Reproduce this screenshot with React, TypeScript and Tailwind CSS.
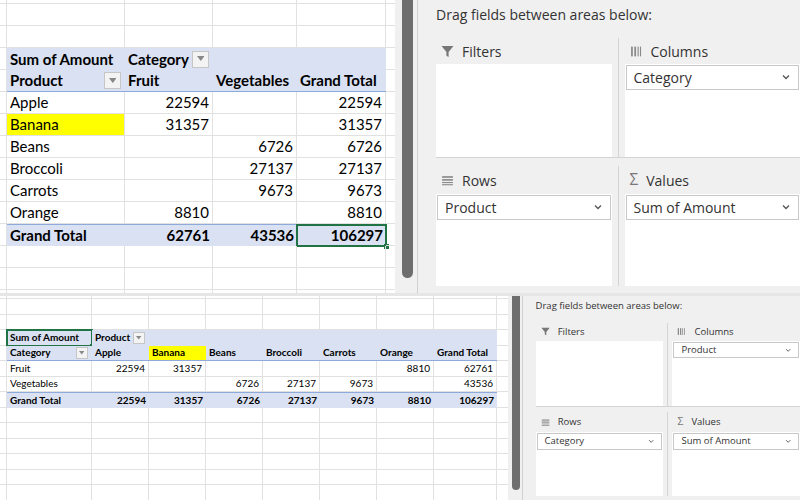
import React from "react";

type C = { t?: string; w: number; r?: boolean; b?: boolean; bg?: string; nob?: boolean; dd?: boolean; sel?: boolean; selTL?: boolean };

function Dd({ s }: { s: number }) {
  return (
    <span className="ml-auto mr-[1px] flex items-center justify-center border border-[#c6c6c6] bg-[#f3f3f3] text-[#777]" style={{ width: s, height: s }}>
      <svg width={s * 0.45} height={s * 0.3} viewBox="0 0 6 4"><path d="M0 0h6L3 4z" fill="#888" /></svg>
    </span>
  );
}

function Row({ cells, h, fs, topBlue, botBlue }: { cells: C[]; h: number; fs: number; topBlue?: boolean; botBlue?: boolean }) {
  return (
    <div className="flex shrink-0" style={{ height: h }}>
      {cells.map((c, i) => (
        <div
          key={i}
          className={`relative flex shrink-0 items-center overflow-visible whitespace-nowrap px-[3px] ${c.r ? "justify-end" : ""} ${c.b ? "font-bold" : ""} ${c.nob ? (botBlue ? "border-b border-[#8eaadb]" : topBlue ? "border-t border-[#8eaadb]" : "") : "border-b border-r border-[#e1e1e1]"}`}
          style={{ width: c.w, fontSize: fs, background: c.bg }}
        >
          {c.t}
          {c.dd && <Dd s={fs + 2} />}
          {(c.sel || c.selTL) && (
            <div className="absolute inset-[-1px] border-2 border-[#217346]">
              <div className="absolute bottom-[-4px] right-[-4px] h-[5px] w-[5px] bg-[#217346]" />
            </div>
          )}
        </div>
      ))}
    </div>
  );
}

const BL = "#d9e1f2";
const YL = "#ffff00";

function TopSheet() {
  const W = [3, 118, 88, 84, 89, 13];
  const empty = (): C[] => W.map((w) => ({ w }));
  const piv = (vals: (string | C)[], blue: boolean): C[] => [
    { w: W[0] },
    ...vals.map((v, i) => {
      const base: C = typeof v === "string" ? { t: v, w: W[i + 1], r: i > 0 } : { ...v, w: W[i + 1] };
      return blue ? { ...base, bg: BL, nob: true } : base;
    }),
    { w: W[5] },
  ];
  return (
    <div className="flex w-[395px] flex-col overflow-hidden bg-white" style={{ fontFamily: "Lato, 'Liberation Sans', sans-serif" }}>
      <Row cells={empty()} h={4} fs={15} />
      <Row cells={empty()} h={22} fs={15} />
      <Row cells={empty()} h={22} fs={15} />
      <Row fs={15} h={22} cells={piv([{ t: "Sum of Amount", b: true, w: 0 }, { t: "Category", b: true, dd: true, w: 0 }, { t: "", w: 0 }, { t: "", w: 0 }], true)} />
      <Row fs={15} h={22} botBlue cells={piv([{ t: "Product", b: true, dd: true, w: 0 }, { t: "Fruit", b: true, w: 0 }, { t: "Vegetables", b: true, w: 0 }, { t: "Grand Total", b: true, w: 0 }], true)} />
      <Row fs={15} h={22} cells={piv([{ t: "Apple", w: 0 }, "22594", "", "22594"], false)} />
      <Row fs={15} h={22} cells={piv([{ t: "Banana", bg: YL, w: 0 }, "31357", "", "31357"], false)} />
      <Row fs={15} h={22} cells={piv([{ t: "Beans", w: 0 }, "", "6726", "6726"], false)} />
      <Row fs={15} h={22} cells={piv([{ t: "Broccoli", w: 0 }, "", "27137", "27137"], false)} />
      <Row fs={15} h={22} cells={piv([{ t: "Carrots", w: 0 }, "", "9673", "9673"], false)} />
      <Row fs={15} h={22} cells={piv([{ t: "Orange", w: 0 }, "8810", "", "8810"], false)} />
      <Row fs={15} h={22} topBlue cells={piv([{ t: "Grand Total", b: true, w: 0 }, { t: "62761", b: true, r: true, w: 0 }, { t: "43536", b: true, r: true, w: 0 }, { t: "106297", b: true, r: true, sel: true, w: 0 }], true)} />
      <Row cells={empty()} h={22} fs={15} />
      <Row cells={empty()} h={22} fs={15} />
      <Row cells={empty()} h={22} fs={15} />
    </div>
  );
}

function BottomSheet() {
  const W = [3, 85, 57, 57, 57, 57, 57, 57, 63, 15];
  const empty = (): C[] => W.map((w) => ({ w }));
  const piv = (vals: C[], blue: boolean): C[] => [
    { w: W[0] },
    ...vals.map((v, i) => {
      const base: C = { ...v, w: W[i + 1] };
      return blue ? { ...base, bg: base.bg ?? BL, nob: true } : base;
    }),
    { w: W[9] },
  ];
  const n = (t: string, b = false): C => ({ t, r: true, b, w: 0 });
  const h = 15.5;
  const fs = 10;
  const hb = (t: string, extra: Partial<C> = {}): C => ({ t, b: true, w: 0, ...extra });
  return (
    <div className="flex w-[508px] flex-col overflow-hidden bg-white" style={{ fontFamily: "Lato, 'Liberation Sans', sans-serif" }}>
      <Row cells={empty()} h={3} fs={fs} />
      <Row cells={empty()} h={h} fs={fs} />
      <Row cells={empty()} h={h} fs={fs} />
      <Row fs={fs} h={h} cells={piv([hb("Sum of Amount", { selTL: true }), hb("Product", { dd: true }), hb(""), hb(""), hb(""), hb(""), hb(""), hb("")], true)} />
      <Row fs={fs} h={h} botBlue cells={piv([hb("Category", { dd: true }), hb("Apple"), hb("Banana", { bg: YL }), hb("Beans"), hb("Broccoli"), hb("Carrots"), hb("Orange"), hb("Grand Total")], true)} />
      <Row fs={fs} h={h} cells={piv([{ t: "Fruit", w: 0 }, n("22594"), n("31357"), n(""), n(""), n(""), n("8810"), n("62761")], false)} />
      <Row fs={fs} h={h} cells={piv([{ t: "Vegetables", w: 0 }, n(""), n(""), n("6726"), n("27137"), n("9673"), n(""), n("43536")], false)} />
      <Row fs={fs} h={h} topBlue cells={piv([hb("Grand Total"), n("22594", true), n("31357", true), n("6726", true), n("27137", true), n("9673", true), n("8810", true), n("106297", true)], true)} />
      {Array.from({ length: 6 }).map((_, i) => (
        <Row key={i} cells={empty()} h={h} fs={fs} />
      ))}
    </div>
  );
}

const Funnel = ({ s }: { s: number }) => (
  <svg width={s} height={s} viewBox="0 0 12 12"><path d="M0.5 1h11L7 6.5V11L5 10V6.5z" fill="#777" /></svg>
);
const ColsIco = ({ s }: { s: number }) => (
  <svg width={s} height={s} viewBox="0 0 12 12" fill="#888"><rect x="1" y="1.5" width="1.6" height="9" /><rect x="4" y="1.5" width="1.6" height="9" /><rect x="7" y="1.5" width="1" height="9" /><rect x="9.2" y="1.5" width="1" height="9" /></svg>
);
const RowsIco = ({ s }: { s: number }) => (
  <svg width={s} height={s} viewBox="0 0 12 12" fill="#888"><rect x="1" y="2" width="10" height="1.5" /><rect x="1" y="4.7" width="10" height="1.5" /><rect x="1" y="7.4" width="10" height="1" /><rect x="1" y="9.4" width="10" height="1" /></svg>
);
const Chev = ({ s }: { s: number }) => (
  <svg width={s} height={s} viewBox="0 0 10 10"><path d="M2.5 3.8L5 6.3l2.5-2.5" stroke="#555" strokeWidth="1.1" fill="none" /></svg>
);

function Area({ icon, label, field, fs, boxH, headH, pad, last, bottomBorder, chevS }: any) {
  return (
    <div className={`flex flex-1 flex-col ${last ? "" : "border-r border-[#d4d4d4]"} ${bottomBorder ? "border-b border-[#d4d4d4]" : ""}`} style={{ paddingLeft: last ? pad : 0, paddingRight: last ? 0 : pad }}>
      <div className="flex items-center gap-[8px] pl-[5px] text-[#333]" style={{ height: headH, fontSize: fs }}>
        {icon}
        <span>{label}</span>
      </div>
      <div className="flex flex-col bg-white" style={{ height: boxH }}>
        {field && (
          <div className="mx-[1px] mt-[1px] flex items-center justify-between border border-[#c8c8c8] pl-[7px] pr-[6px] text-[#333]" style={{ fontSize: fs, height: fs * 1.75 }}>
            <span>{field}</span>
            <Chev s={chevS} />
          </div>
        )}
      </div>
    </div>
  );
}

function Panel({ w, fs, scrollW, thumbH, cols, rows, values, scale }: any) {
  const s = scale;
  return (
    <div className="flex bg-[#f0f0f0]" style={{ width: w, fontFamily: "'Open Sans', 'Noto Sans', sans-serif" }}>
      <div className="flex shrink-0 justify-center border-r border-[#d0d0d0]" style={{ width: scrollW }}>
        <div className="rounded-b-md bg-[#6e6e6e]" style={{ width: 11 * s, height: thumbH, marginLeft: 2 * s }} />
      </div>
      <div className="flex flex-1 flex-col" style={{ paddingLeft: 18 * s }}>
        <div className="text-[#333]" style={{ fontSize: fs, height: 38 * s, paddingTop: 4 * s }}>Drag fields between areas below:</div>
        <div className="flex">
          <Area icon={<Funnel s={13 * s} />} label="Filters" fs={fs} boxH={93 * s} headH={26 * s} pad={6 * s} bottomBorder chevS={12 * s} />
          <Area icon={<ColsIco s={13 * s} />} label="Columns" field={cols} fs={fs} boxH={93 * s} headH={26 * s} pad={6 * s} last bottomBorder chevS={12 * s} />
        </div>
        <div className="flex" style={{ paddingTop: 8 * s }}>
          <Area icon={<RowsIco s={13 * s} />} label="Rows" field={rows} fs={fs} boxH={92 * s} headH={28 * s} pad={6 * s} chevS={12 * s} />
          <Area icon={<span style={{ fontSize: fs * 1.1 }} className="text-[#777]">Σ</span>} label="Values" field={values} fs={fs} boxH={92 * s} headH={28 * s} pad={6 * s} last chevS={12 * s} />
        </div>
      </div>
    </div>
  );
}

export default function App() {
  return (
    <div className="flex h-[500px] w-[800px] flex-col overflow-hidden bg-white">
      <div className="flex h-[293px] shrink-0 overflow-hidden">
        <TopSheet />
        <Panel w={405} fs={14} scrollW={23} thumbH={278} cols="Category" rows="Product" values="Sum of Amount" scale={1} />
      </div>
      <div className="h-[3px] shrink-0 bg-[#e6e6e6]" />
      <div className="flex h-[204px] shrink-0 overflow-hidden">
        <BottomSheet />
        <Panel w={292} fs={9.5} scrollW={15} thumbH={194} cols="Product" rows="Category" values="Sum of Amount" scale={0.7} />
      </div>
    </div>
  );
}
